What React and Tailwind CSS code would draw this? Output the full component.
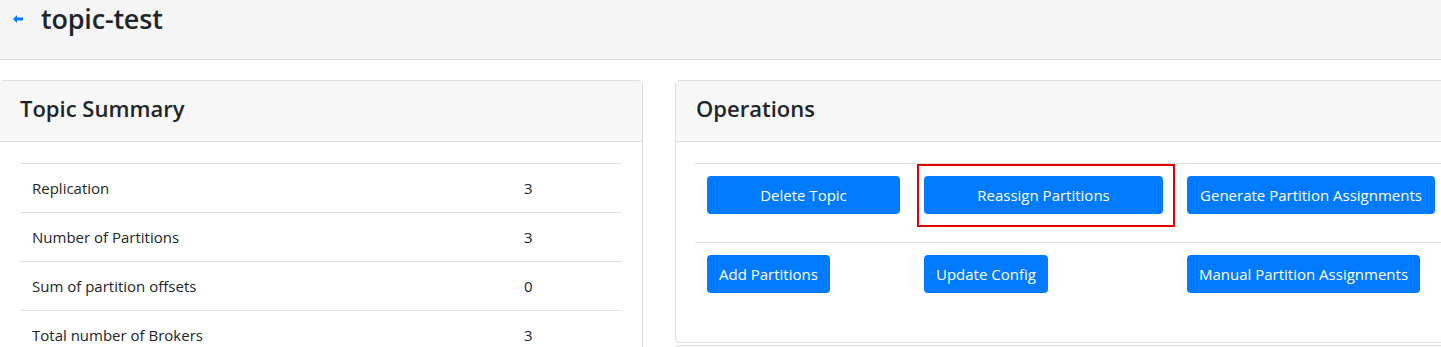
import React from 'react';

const summary = [
  ['Replication', '3'],
  ['Number of Partitions', '3'],
  ['Sum of partition offsets', '0'],
  ['Total number of Brokers', '3'],
  ['Number of Brokers for Topic', '3'],
];

const Btn = ({ children, block }) => (
  <button
    className={
      (block ? 'w-full ' : '') +
      'h-[38px] px-3 rounded-[4px] bg-[#007bff] text-white text-[15px] leading-[22px] whitespace-nowrap'
    }
  >
    {children}
  </button>
);

const CardHeader = ({ title }) => (
  <div className="h-[61px] bg-[#f7f7f7] border-b border-[#dfdfdf] px-5 pt-[11px]">
    <h4 className="text-[22px] leading-[32px] font-semibold text-[#212529]">{title}</h4>
  </div>
);

export default function App() {
  return (
    <div className="w-[1441px] h-[347px] overflow-hidden bg-white font-['Open_Sans',sans-serif] text-[#212529]">
      {/* page header */}
      <div className="h-[60px] bg-[#f5f5f5] border-b border-[#dcdcdc] flex items-start">
        <div className="flex items-center h-[37px]">
          <svg className="ml-[13px] w-[10px] h-[8px]" viewBox="0 0 10 8">
            <path d="M0 4 L4 0 L4 2.5 L10 2.5 L10 5.5 L4 5.5 L4 8 Z" fill="#007bff" />
          </svg>
          <h2 className="ml-[18px] text-[27px] leading-[36px] font-semibold tracking-[-0.2px]">topic-test</h2>
        </div>
      </div>

      <div className="flex gap-[32px] pt-[20px]">
        {/* topic summary */}
        <div className="w-[644px] shrink-0 border border-[#dfdfdf] rounded-[4px] -ml-px">
          <CardHeader title="Topic Summary" />
          <div className="px-5 pt-[21px]">
            <table className="w-full text-[15px]">
              <tbody>
                {summary.map(([k, v]) => (
                  <tr key={k} className="border-t border-[#dee2e6] h-[49px]">
                    <td className="px-3 py-3 leading-6">{k}</td>
                    <td className="px-3 py-3 leading-6 w-[110px]">{v}</td>
                  </tr>
                ))}
              </tbody>
            </table>
          </div>
        </div>

        {/* operations */}
        <div className="w-[793px] shrink-0">
          <div className="border border-[#dfdfdf] rounded-[4px]">
            <CardHeader title="Operations" />
            <div className="pl-[19px] pr-5 pt-[21px] pb-[20px]">
              <table className="w-[752px] table-fixed">
                <colgroup>
                  <col className="w-[217px]" />
                  <col className="w-[263px]" />
                  <col className="w-[272px]" />
                </colgroup>
                <tbody>
                  <tr className="border-t border-[#dee2e6] h-[79px] align-top">
                    <td className="p-3">
                      <Btn block>Delete Topic</Btn>
                    </td>
                    <td className="p-3 relative">
                      <div className="absolute left-[5px] top-0 w-[258px] h-[63px] border-2 border-[#e00000]" />
                      <Btn block>Reassign Partitions</Btn>
                    </td>
                    <td className="p-3">
                      <Btn block>Generate Partition Assignments</Btn>
                    </td>
                  </tr>
                  <tr className="border-t border-[#dee2e6] h-[79px] align-top">
                    <td className="p-3">
                      <Btn>Add Partitions</Btn>
                    </td>
                    <td className="p-3">
                      <Btn>Update Config</Btn>
                    </td>
                    <td className="p-3">
                      <Btn>Manual Partition Assignments</Btn>
                    </td>
                  </tr>
                </tbody>
              </table>
            </div>
          </div>
          <div className="mt-[2px] h-[20px] border border-[#dfdfdf] rounded-t-[4px] bg-[#f7f7f7]" />
        </div>
      </div>
    </div>
  );
}
